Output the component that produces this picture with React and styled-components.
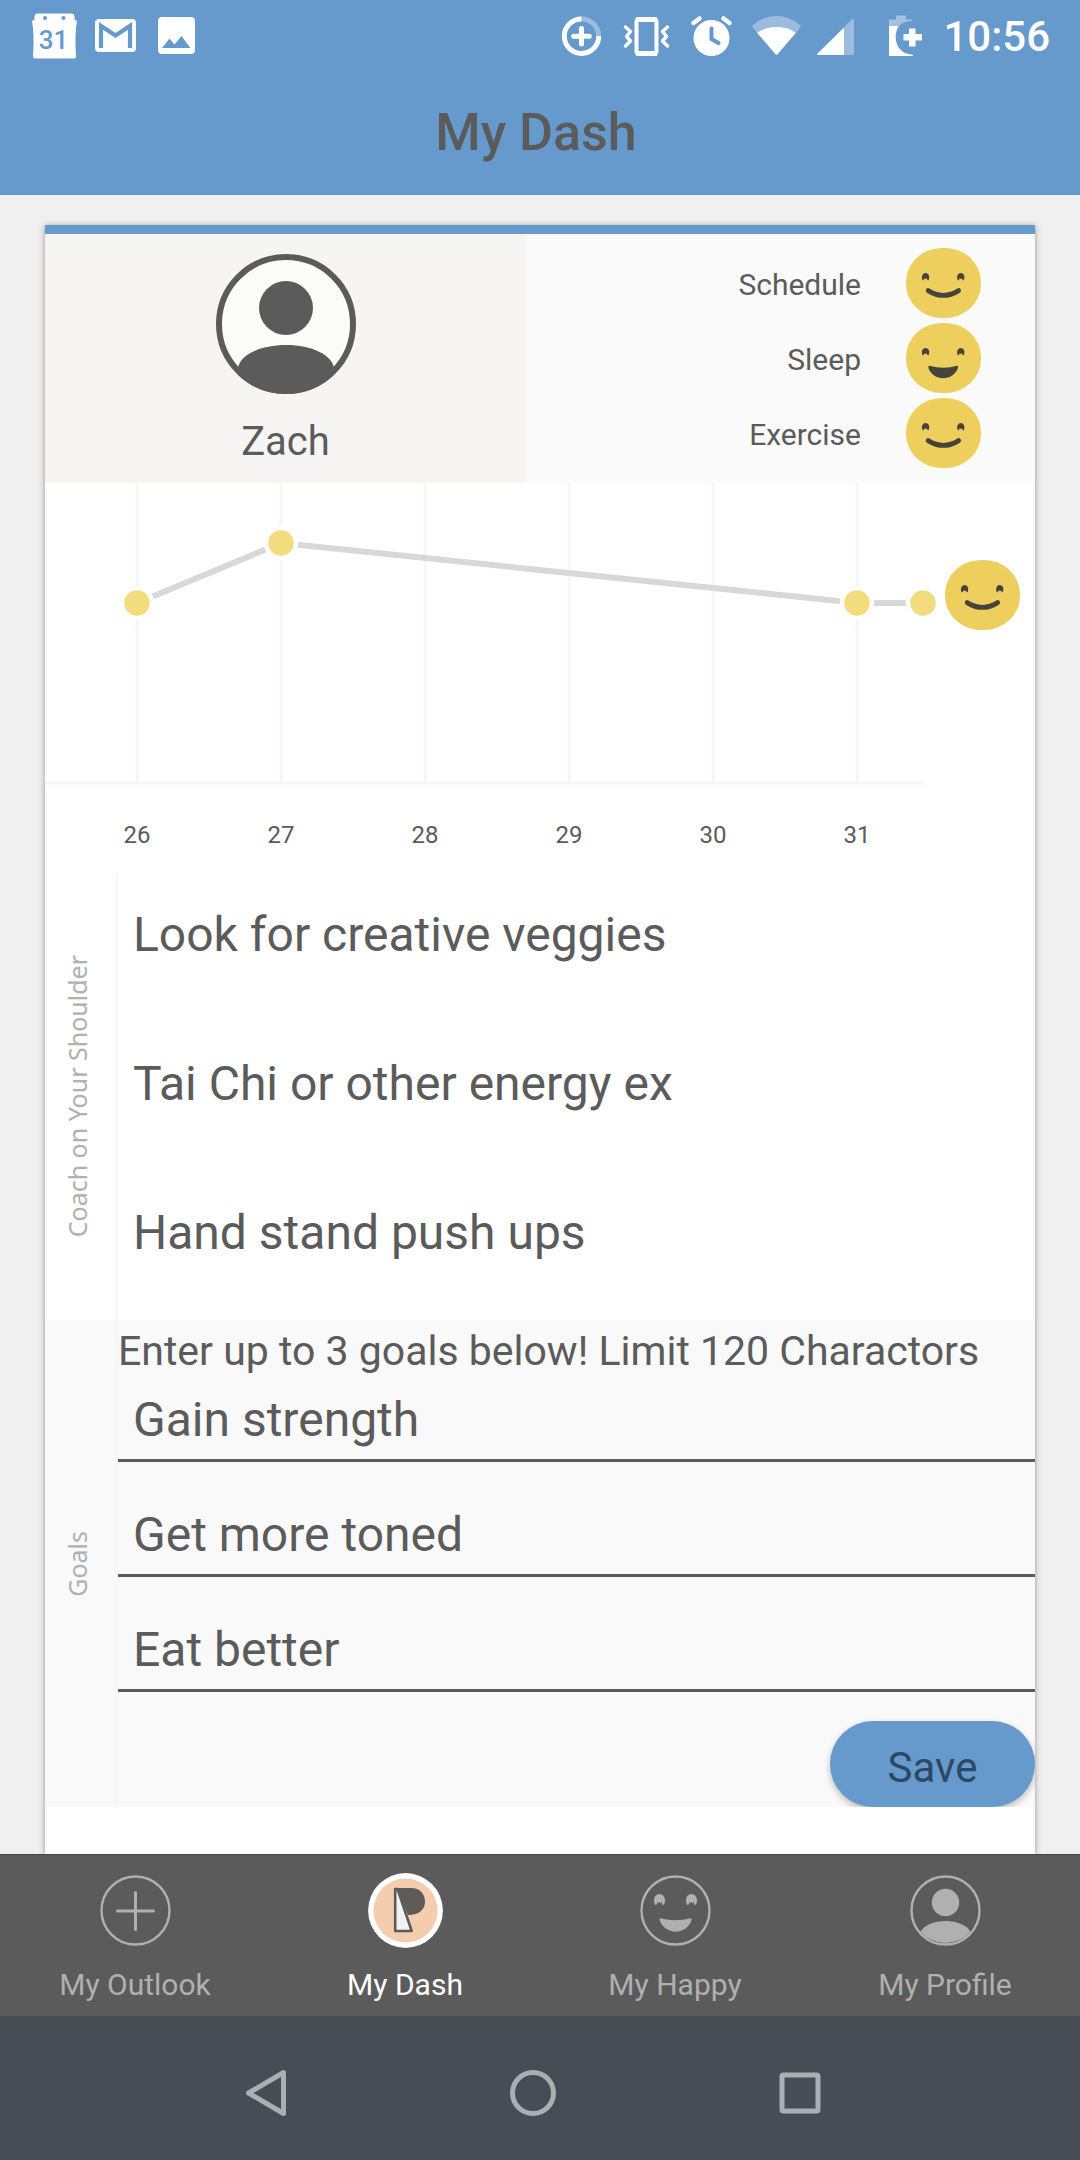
import React, { useState } from "react";
import styled, { createGlobalStyle, css } from "styled-components";

const colors = {
  blue: "#6699cc",
  ink: "#5b5b5b",
  muted: "#b0b0b0",
  face: "#eecf5e",
  faceInk: "#46423c",
};

const GlobalStyle = createGlobalStyle`
  *, *::before, *::after { box-sizing: border-box; }
  body {
    margin: 0;
    background: #f0f0f0;
    color: ${colors.ink};
    font-family: Roboto, "Liberation Sans", sans-serif;
  }
  h1, p, ul { margin: 0; padding: 0; font-weight: 400; }
  ul { list-style: none; }
  svg { display: block; flex: none; }
`;

const Screen = styled.div`
  display: flex;
  flex-direction: column;
  min-height: 100vh;
`;

const Header = styled.header`
  background: ${colors.blue};
`;

const StatusBar = styled.div`
  display: flex;
  align-items: center;
  justify-content: space-between;
  height: 72px;
  padding: 0 30px 0 32px;
  color: #fff;
`;

const StatusGroup = styled.div`
  display: flex;
  align-items: center;
  gap: 16px;
`;

const Clock = styled.time`
  padding-top: 2px;
  font-size: 42px;
  line-height: 48px;
  font-weight: 500;
`;

const Title = styled.h1`
  padding: 33px 8px 34px 0;
  font-size: 52px;
  line-height: 56px;
  font-weight: 500;
  text-align: center;
`;

const Main = styled.main`
  display: flex;
  flex: 1;
  padding: 30px 45px 0;
`;

const Card = styled.article`
  flex: 1;
  min-width: 0;
  background: #fff;
  border-top: 9px solid ${colors.blue};
  box-shadow: 0 1px 6px rgba(0, 0, 0, 0.4);
`;

const Summary = styled.section`
  display: grid;
  grid-template-columns: 481fr 509fr;
`;

const Person = styled.div`
  display: flex;
  flex-direction: column;
  align-items: center;
  gap: 24px;
  padding: 20px 0 17px;
  background: #f6f5f3;
`;

const PersonName = styled.p`
  font-size: 40px;
  line-height: 48px;
`;

const Ratings = styled.ul`
  display: flex;
  flex-direction: column;
  gap: 5px;
  padding: 14px 54px 15px 0;
  background: #fafafa;
`;

const Rating = styled.li`
  display: flex;
  align-items: center;
  justify-content: flex-end;
  gap: 45px;
  font-size: 30px;
  line-height: 36px;
`;

const RatingLabel = styled.span`
  padding-top: 3px;
`;

const Chart = styled.svg`
  width: 100%;
  height: auto;
  font-size: 24px;
`;

const Section = styled.section`
  display: grid;
  grid-template-columns: 73px 1fr;
  background: ${(p) => (p.$shaded ? "#f9f9f9" : "#fff")};
`;

const SideLabel = styled.div`
  display: flex;
  align-items: center;
  justify-content: center;
  padding-right: 8px;
  border-right: 2px solid #f6f6f6;
  color: ${colors.muted};
  font-family: "Noto Sans", "Open Sans", sans-serif;
  font-size: 25px;
  line-height: 36px;
`;

const SideText = styled.span`
  writing-mode: vertical-rl;
  transform: rotate(180deg);
`;

const TipList = styled.ul`
  padding: 0 15px;
`;

const Tip = styled.li`
  padding: 34px 0 59px;
  font-size: 48px;
  line-height: 56px;
`;

const GoalForm = styled.form`
  display: flex;
  flex-direction: column;
`;

const Hint = styled.p`
  padding: 7px 0 1px;
  font-size: 41px;
  line-height: 48px;
`;

const GoalInput = styled.input`
  width: 100%;
  height: 86px;
  margin-bottom: 29px;
  padding: 4px 15px 0;
  border: 0;
  border-bottom: 3px solid ${colors.ink};
  border-radius: 0;
  outline: 0;
  background: transparent;
  color: inherit;
  font: inherit;
  font-size: 48px;
`;

const SaveButton = styled.button`
  align-self: flex-end;
  width: 205px;
  height: 86px;
  padding: 6px 0 0;
  border: 0;
  border-radius: 43px;
  background: ${colors.blue};
  box-shadow: 0 3px 6px rgba(0, 0, 0, 0.25);
  clip-path: inset(-6px 0 0 -6px);
  color: #2d4862;
  font: inherit;
  font-size: 42px;
`;

const TabBar = styled.nav`
  display: grid;
  grid-template-columns: repeat(4, 1fr);
  height: 162px;
  border-top: 1px solid #444;
  background: ${colors.ink};
`;

const Tab = styled.a`
  display: flex;
  flex-direction: column;
  align-items: center;
  gap: 19px;
  padding-top: 17px;
  color: ${colors.muted};
  font-size: 30px;
  line-height: 36px;
  text-decoration: none;
  ${(p) =>
    p.$active &&
    css`
      color: #fff;
    `}
`;

const SystemBar = styled.div`
  display: grid;
  grid-template-columns: repeat(3, 1fr);
  height: 144px;
  padding: 0 147px 0 132px;
  background: #464d54;
`;

const SystemButton = styled.button`
  display: flex;
  align-items: center;
  justify-content: center;
  padding: 10px 0 0;
  border: 0;
  background: transparent;
  color: #a9b0b4;
`;

const eyePath =
  "M-4.8 4.500C-7 -1 -4 -5.500 0 -5.500S7 -1 4.800 4.500Q4 6 2.800 5L2 2.200L1 4L0 2.200L-1 4L-2 2.200L-2.800 5Q-4 6 -4.800 4.500Z";

function Face({ mood = "smile", ...rest }) {
  return (
    <svg width="75" height="70" viewBox="0 0 75 70" aria-hidden="true" {...rest}>
      <rect width="75" height="70" rx="36" ry="34" fill={colors.face} />
      <g fill={colors.faceInk}>
        <path d={eyePath} transform="translate(19.6 28.700) scale(0.660)" />
        <path d={eyePath} transform="translate(54.8 28.700) scale(0.660)" />
      </g>
      {mood === "laugh" ? (
        <path
          d="M23.6 42.7Q37.5 46.6 51 42.7Q52.6 42.6 52 45C49.5 51.5 44 55.2 37.3 55.2S24.8 51.5 22.4 45Q22 42.4 23.6 42.7Z"
          fill={colors.faceInk}
        />
      ) : (
        <path
          d="M22.2 42.6Q37.4 52.2 52.6 42.6"
          fill="none"
          stroke={colors.faceInk}
          strokeWidth="4.8"
          strokeLinecap="round"
        />
      )}
    </svg>
  );
}

function Avatar() {
  return (
    <svg width="140" height="140" viewBox="0 0 140 140" aria-hidden="true">
      <defs>
        <clipPath id="avatar-clip">
          <circle cx="70" cy="70" r="70" />
        </clipPath>
      </defs>
      <circle cx="70" cy="70" r="67" fill="#fbfbf9" stroke={colors.ink} strokeWidth="6" />
      <circle cx="70" cy="54" r="27" fill={colors.ink} />
      <path
        d="M22 114C24 101 44 91 70 91S116 101 118 114L118 140H22Z"
        fill={colors.ink}
        clipPath="url(#avatar-clip)"
      />
    </svg>
  );
}

const days = [26, 27, 28, 29, 30, 31];
const dayX = (day) => 92 + (day - 26) * 144;
const points = [
  [dayX(26), 120],
  [dayX(27), 60],
  [dayX(31), 120],
  [878, 120],
];

function MoodChart() {
  return (
    <Chart viewBox="0 0 990 390" role="img" aria-label="Mood by day">
      <g stroke="#f6f6f6" strokeWidth="3">
        {days.map((d) => (
          <path key={d} d={`M${dayX(d)} 0V300`} />
        ))}
        <path d="M0 300H879" />
      </g>
      <polyline
        points={points.map((p) => p.join(",")).join(" ")}
        fill="none"
        stroke="#d8d8d8"
        strokeWidth="6"
      />
      {points.map(([x, y]) => (
        <circle key={x} cx={x} cy={y} r="15" fill="#f3dc7d" stroke="#fff" strokeWidth="4.5" />
      ))}
      <Face x="900" y="77" />
      <g fill={colors.ink} textAnchor="middle">
        {days.map((d) => (
          <text key={d} x={dayX(d)} y="360">
            {d}
          </text>
        ))}
      </g>
    </Chart>
  );
}

function CalendarIcon() {
  return (
    <svg width="45" height="48" viewBox="0 0 45 48" aria-hidden="true">
      <path
        d="M5 1.5H40Q42 1.5 42.5 4V7.500L45 9Q42.500 22 44 44.500Q44 46.500 42 46.500H3Q1 46.500 1 44.500Q2.500 22 0 9L2.500 7.500V4Q3 1.500 5 1.500Z"
        fill="#fff"
      />
      <circle cx="13" cy="6" r="2" fill={colors.blue} />
      <circle cx="31.500" cy="6" r="2" fill={colors.blue} />
      <text x="21.500" y="37" fontSize="26" fontWeight="500" textAnchor="middle" fill={colors.blue}>
        31
      </text>
    </svg>
  );
}

function MailIcon() {
  return (
    <svg width="45" height="48" viewBox="0 0 45 48" aria-hidden="true">
      <rect x="2" y="7" width="41" height="33" rx="4" fill="#fff" />
      <path d="M8 36V14L22.500 23.500L37 14V36" fill="none" stroke={colors.blue} strokeWidth="4.200" />
    </svg>
  );
}

function PictureIcon() {
  return (
    <svg width="45" height="48" viewBox="0 0 45 48" aria-hidden="true">
      <rect x="4" y="5" width="37" height="37" rx="4" fill="#fff" />
      <path d="M8 36L15.500 26.500L20.500 32.500L27.500 24L36.500 36Z" fill={colors.blue} />
    </svg>
  );
}

function DataSaverIcon() {
  return (
    <svg width="49" height="48" viewBox="0 0 49 48" aria-hidden="true" fill="none" stroke="#fff" strokeWidth="5">
      <path d="M24.500 7A17.200 17.200 0 0 1 41.700 24" opacity="0.35" />
      <path d="M24.500 7A17.200 17.200 0 1 0 41.700 24" />
      <path d="M24.500 16.500V32M16.700 24.300H32.300" strokeLinecap="round" />
    </svg>
  );
}

function VibrateIcon() {
  return (
    <svg width="49" height="48" viewBox="0 0 49 48" aria-hidden="true" fill="none" stroke="#fff">
      <rect x="14.500" y="7" width="20" height="35" rx="2.500" strokeWidth="4" />
      <path d="M14 7.500H35M14 41.500H35" strokeWidth="5" />
      <path
        d="M3.500 15L8.500 19.500L4.500 24.500L8.500 29L3.500 34M45.500 15L40.500 19.500L44.500 24.500L40.500 29L45.500 34"
        strokeWidth="3.500"
        strokeLinecap="round"
        strokeLinejoin="round"
      />
    </svg>
  );
}

function AlarmIcon() {
  return (
    <svg width="49" height="48" viewBox="0 0 49 48" aria-hidden="true" fill="none" strokeLinecap="round">
      <circle cx="24.500" cy="26" r="18" fill="#fff" />
      <path d="M6.500 11L12.500 6.500M42.500 11L36.500 6.500" stroke="#fff" strokeWidth="4.500" />
      <path d="M24.500 16.500V27L31.500 31" stroke={colors.blue} strokeWidth="4" />
    </svg>
  );
}

function WifiIcon() {
  return (
    <svg width="49" height="48" viewBox="0 0 49 48" aria-hidden="true" fill="#fff">
      <path d="M0.500 13.500Q10.500 4 24.500 4T48.500 13.500V15L44 20.700Q35.500 14.700 24.500 14.700T5 20.700L0.500 15Z" opacity="0.35" />
      <path d="M5 20.700Q13.500 14.700 24.500 14.700T44 20.700L25.500 42.300Q24.500 43.400 23.500 42.300Z" />
    </svg>
  );
}

function SignalIcon() {
  return (
    <svg width="49" height="48" viewBox="0 0 49 48" aria-hidden="true" fill="#fff">
      <path d="M27 15.500L34 8Q37 5.500 37 9V41.500Q37 43 35.500 43H27Z" opacity="0.35" />
      <path d="M27 15.500V43H1.500Q-0.500 43 0.500 41.500Z" />
    </svg>
  );
}

function BatteryIcon() {
  return (
    <svg width="45" height="48" viewBox="0 0 45 48" aria-hidden="true" fill="#fff">
      <path d="M7 7.500H14V3.500H24V7.500H30V9C24 9.500 20 11 17 14H7Z" opacity="0.4" />
      <path d="M7 14H17C11.500 22 12.500 35 23 41L31 43V44H7Z" />
      <path d="M27 16.500H33.500V22H40V28.500H33.500V34.500H27V28.500H21.500V22H27Z" />
    </svg>
  );
}

const TabIcon = ({ children }) => (
  <svg width="75" height="76" viewBox="0 0 75 76" fill="none" stroke="currentColor" aria-hidden="true">
    {children}
  </svg>
);

const ring = <circle cx="37.500" cy="38.500" r="34" strokeWidth="2.400" />;

function OutlookIcon() {
  return (
    <TabIcon>
      {ring}
      <path d="M37.500 20.500V57.500M19.500 39H55.500" strokeWidth="3" strokeLinecap="round" />
    </TabIcon>
  );
}

function DashIcon() {
  return (
    <TabIcon>
      <circle cx="37.500" cy="38.500" r="37.400" fill="#fff" stroke="none" />
      <circle cx="37.500" cy="38.500" r="32" fill="#f3cdae" stroke="none" />
      <path d="M27 16H43C52 16 57 22 57 29.500S52 43 40 43L30 18Z" fill="#5e5c59" stroke="none" />
      <path d="M27.200 17V59H43.700L29.500 17Z" fill="#f2f2f2" stroke="#5e5c59" strokeWidth="2.600" strokeLinejoin="round" />
    </TabIcon>
  );
}

function HappyIcon() {
  return (
    <TabIcon>
      {ring}
      <g fill="currentColor" stroke="none">
        <path d={eyePath} transform="translate(21.500 27.500)" />
        <path d={eyePath} transform="translate(53.500 27.500)" />
        <path d="M22.500 46.300Q37.500 50 52.500 46.300Q53.800 46.200 53.500 48C51.500 55 45 59.700 37.800 59.700S23.500 55 21.700 48Q21.300 46 22.500 46.300Z" />
      </g>
    </TabIcon>
  );
}

function ProfileIcon() {
  return (
    <TabIcon>
      {ring}
      <circle cx="37.500" cy="30.500" r="13.700" fill="currentColor" stroke="none" />
      <path
        d="M12.500 60C16 53 26 49 37.500 49S59 53 62.500 60A34 34 0 0 1 12.500 60Z"
        fill="currentColor"
        stroke="none"
      />
    </TabIcon>
  );
}

const ratings = [
  { label: "Schedule", mood: "smile" },
  { label: "Sleep", mood: "laugh" },
  { label: "Exercise", mood: "smile" },
];

const tips = ["Look for creative veggies", "Tai Chi or other energy ex", "Hand stand push ups"];

const tabs = [
  { label: "My Outlook", href: "#outlook", Icon: OutlookIcon },
  { label: "My Dash", href: "#dash", Icon: DashIcon, active: true },
  { label: "My Happy", href: "#happy", Icon: HappyIcon },
  { label: "My Profile", href: "#profile", Icon: ProfileIcon },
];

export default function App() {
  const [goals, setGoals] = useState(["Gain strength", "Get more toned", "Eat better"]);
  const editGoal = (index, value) => setGoals(goals.map((g, i) => (i === index ? value : g)));

  return (
    <Screen>
      <GlobalStyle />
      <Header>
        <StatusBar>
          <StatusGroup>
            <CalendarIcon />
            <MailIcon />
            <PictureIcon />
          </StatusGroup>
          <StatusGroup>
            <DataSaverIcon />
            <VibrateIcon />
            <AlarmIcon />
            <WifiIcon />
            <SignalIcon />
            <BatteryIcon />
            <Clock>10:56</Clock>
          </StatusGroup>
        </StatusBar>
        <Title>My Dash</Title>
      </Header>

      <Main>
        <Card>
          <Summary>
            <Person>
              <Avatar />
              <PersonName>Zach</PersonName>
            </Person>
            <Ratings>
              {ratings.map((r) => (
                <Rating key={r.label}>
                  <RatingLabel>{r.label}</RatingLabel>
                  <Face mood={r.mood} />
                </Rating>
              ))}
            </Ratings>
          </Summary>

          <MoodChart />

          <Section>
            <SideLabel>
              <SideText>Coach on Your Shoulder</SideText>
            </SideLabel>
            <TipList>
              {tips.map((tip) => (
                <Tip key={tip}>{tip}</Tip>
              ))}
            </TipList>
          </Section>

          <Section $shaded>
            <SideLabel>
              <SideText>Goals</SideText>
            </SideLabel>
            <GoalForm onSubmit={(e) => e.preventDefault()}>
              <Hint>Enter up to 3 goals below! Limit 120 Charactors</Hint>
              {goals.map((goal, i) => (
                <GoalInput
                  key={i}
                  type="text"
                  maxLength={120}
                  aria-label={`Goal ${i + 1}`}
                  value={goal}
                  onChange={(e) => editGoal(i, e.target.value)}
                />
              ))}
              <SaveButton type="submit">Save</SaveButton>
            </GoalForm>
          </Section>
        </Card>
      </Main>

      <TabBar>
        {tabs.map(({ label, href, Icon, active }) => (
          <Tab key={label} href={href} $active={active} aria-current={active ? "page" : undefined}>
            <Icon />
            {label}
          </Tab>
        ))}
      </TabBar>

      <SystemBar>
        <SystemButton type="button" aria-label="Back">
          <svg width="48" height="48" viewBox="0 0 48 48" fill="none" stroke="currentColor" strokeWidth="5" strokeLinejoin="round">
            <path d="M6.500 24L41.500 3.500V44.500Z" />
          </svg>
        </SystemButton>
        <SystemButton type="button" aria-label="Home">
          <svg width="48" height="48" viewBox="0 0 48 48" fill="none" stroke="currentColor" strokeWidth="5">
            <circle cx="24" cy="24" r="20.500" />
          </svg>
        </SystemButton>
        <SystemButton type="button" aria-label="Recent apps">
          <svg width="48" height="48" viewBox="0 0 48 48" fill="none" stroke="currentColor" strokeWidth="5">
            <rect x="6" y="6" width="36" height="36" rx="1.500" />
          </svg>
        </SystemButton>
      </SystemBar>
    </Screen>
  );
}
